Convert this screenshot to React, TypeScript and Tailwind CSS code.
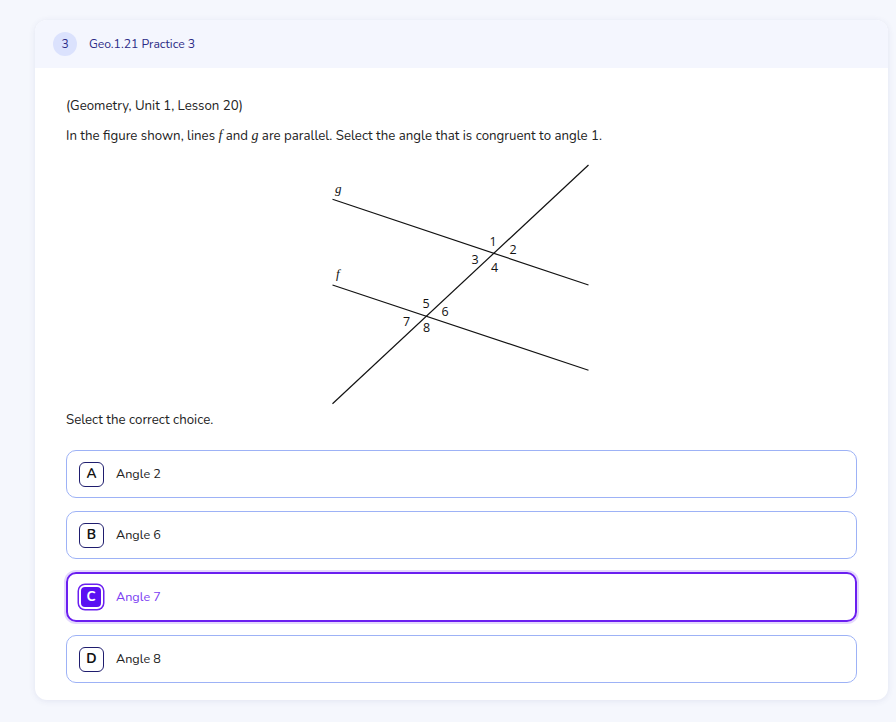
import React, { useState } from 'react';

const choices = [
  { key: 'A', label: 'Angle 2' },
  { key: 'B', label: 'Angle 6' },
  { key: 'C', label: 'Angle 7' },
  { key: 'D', label: 'Angle 8' },
];

const Figure = () => (
  <svg width="262" height="244" viewBox="332 162 262 244" className="block">
    <g stroke="#111" strokeWidth="1.2" fill="none">
      <line x1="333.5" y1="198.3" x2="589.5" y2="284" />
      <line x1="333.5" y1="284" x2="589.5" y2="369.3" />
      <line x1="333.5" y1="402.7" x2="589.5" y2="164" />
    </g>
    <g fontFamily="'Liberation Serif', serif" fontStyle="italic" fontSize="13" fill="#111">
      <text x="336" y="192">g</text>
      <text x="337" y="277">f</text>
    </g>
    <g fontFamily="'Open Sans', sans-serif" fontSize="12.5" fill="#111" textAnchor="middle">
      <text x="494" y="245">1</text>
      <text x="514" y="252.5">2</text>
      <text x="476" y="263">3</text>
      <text x="495.5" y="271">4</text>
      <text x="427" y="307">5</text>
      <text x="446" y="315">6</text>
      <text x="407.5" y="324.5">7</text>
      <text x="427.5" y="331">8</text>
    </g>
  </svg>
);

export default function App() {
  const [selected, setSelected] = useState('C');

  return (
    <div className="min-h-screen bg-[#f5f7fd] pt-5 pl-[35px] pr-2 pb-5" style={{ fontFamily: "Nunito, Lato, 'Noto Sans', sans-serif" }}>
      <div className="w-[853px] rounded-xl bg-white shadow-[0_1px_6px_rgba(60,70,140,0.10)] overflow-hidden">
        {/* Header */}
        <div className="h-12 bg-[#f4f6fe] flex items-center pl-[18px] gap-3">
          <div className="w-6 h-6 rounded-full bg-[#dbe2fd] flex items-center justify-center text-[12px] text-[#2b2a86]">3</div>
          <span className="text-[12.2px] text-[#2b2a86]">Geo.1.21 Practice 3</span>
        </div>

        {/* Body */}
        <div className="px-[31px] pt-[28px] pb-[17px] text-[#222] text-[13.25px]">
          <p className="leading-5">(Geometry, Unit 1, Lesson 20)</p>
          <p className="leading-5 mt-[10px]">
            In the figure shown, lines <i style={{ fontFamily: "'Liberation Serif', serif" }} className="text-[14px]">f</i> and <i style={{ fontFamily: "'Liberation Serif', serif" }} className="text-[14px]">g</i> are parallel. Select the angle that is congruent to angle 1.
          </p>

          <div className="flex justify-center mt-[17px]">
            <Figure />
          </div>

          <p className="leading-5 mt-[3px]">Select the correct choice.</p>

          <div className="mt-[20px] flex flex-col gap-[13px]">
            {choices.map((c) => {
              const active = selected === c.key;
              return (
                <button
                  key={c.key}
                  onClick={() => setSelected(c.key)}
                  className={
                    active
                      ? 'h-[50px] w-full rounded-[10px] border-2 border-[#6b1ff0] shadow-[0_0_0_2px_#e4d8fd] flex items-center pl-[11px] gap-[13px] text-left'
                      : 'h-[48px] w-full rounded-[10px] border border-[#9db2f6] flex items-center pl-[12px] gap-[12px] text-left'
                  }
                >
                  {active ? (
                    <span className="w-6 h-6 rounded-[6px] bg-[#5a10f2] border-2 border-white shadow-[0_0_0_1.5px_#6b1ff0] flex items-center justify-center text-white text-[13.5px] font-bold">
                      {c.key}
                    </span>
                  ) : (
                    <span className="w-[25px] h-[25px] rounded-[6px] border-[1.5px] border-[#1f1d6e] flex items-center justify-center text-[#111] text-[13.5px] font-bold">
                      {c.key}
                    </span>
                  )}
                  <span className={active ? 'text-[12.6px] text-[#7b3df2]' : 'text-[12.6px] text-[#222]'}>{c.label}</span>
                </button>
              );
            })}
          </div>
        </div>
      </div>
    </div>
  );
}
